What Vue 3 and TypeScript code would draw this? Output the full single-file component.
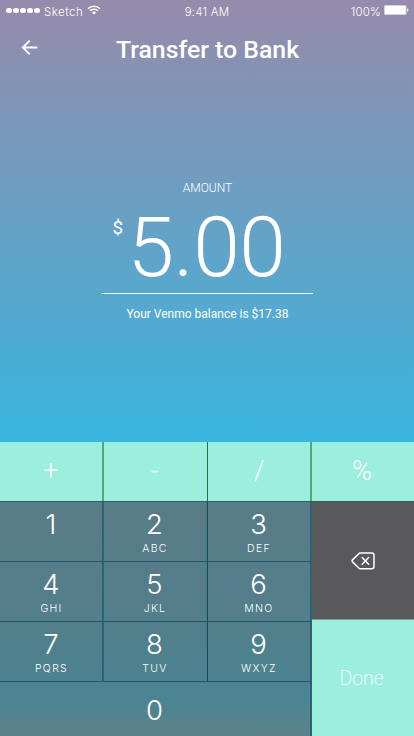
<script setup lang="ts">
interface Key {
  digit: string
  letters: string
}

const operators: string[] = ['+', '-', '/', '%']

const keys: Key[] = [
  { digit: '1', letters: '' },
  { digit: '2', letters: 'ABC' },
  { digit: '3', letters: 'DEF' },
  { digit: '4', letters: 'GHI' },
  { digit: '5', letters: 'JKL' },
  { digit: '6', letters: 'MNO' },
  { digit: '7', letters: 'PQRS' },
  { digit: '8', letters: 'TUV' },
  { digit: '9', letters: 'WXYZ' },
]
</script>

<template>
  <main class="screen">
    <div class="status">
      <div class="carrier">
        <span class="dots"><i v-for="n in 5" :key="n" class="dot"></i></span>
        <span class="carrier-name">Sketch</span>
        <svg class="wifi" width="14" height="10" viewBox="0 0 14 10" fill="none" stroke="#fff">
          <path d="M1 3.7a8.4 8.4 0 0 1 12 0M3.1 5.8a5.5 5.5 0 0 1 7.8 0" stroke-width="1.4" />
          <path d="M7 9.6 4.9 7.5a3 3 0 0 1 4.2 0z" fill="#fff" stroke="none" />
        </svg>
      </div>
      <div class="time">9:41 AM</div>
      <div class="power">
        <span>100%</span>
        <svg class="battery" width="25" height="10" viewBox="0 0 25 10">
          <rect x="0" y="0" width="22.5" height="10" rx="1.6" fill="#fff" opacity=".6" />
          <rect x="1" y="1" width="20.5" height="8" rx=".8" fill="#fff" />
          <path d="M23.2 3.2c1.6.5 1.6 3.1 0 3.6z" fill="#fff" />
        </svg>
      </div>
    </div>

    <header class="header">
      <svg class="back" width="17" height="17" viewBox="0 0 18 18" fill="none" stroke="#fff" stroke-width="2">
        <path d="M17.4 9H2.4M9.2 1.8 2 9l7.2 7.2" />
      </svg>
      <h1 class="title">Transfer to Bank</h1>
    </header>

    <section class="amount">
      <div class="label">AMOUNT</div>
      <div class="value">
        <span class="currency">$</span>
        <span class="number">5.00</span>
      </div>
      <div class="balance">Your Venmo balance is $17.38</div>
    </section>

    <section class="keypad">
      <div class="operators">
        <button v-for="op in operators" :key="op" class="op">{{ op }}</button>
      </div>
      <div class="lower">
        <div class="digits">
          <button v-for="k in keys" :key="k.digit" class="key">
            <span class="digit">{{ k.digit }}</span>
            <span class="letters">{{ k.letters }}</span>
          </button>
          <button class="key zero"><span class="digit">0</span></button>
        </div>
        <div class="actions">
          <button class="delete">
            <svg width="24" height="18" viewBox="0 0 24 18" fill="none" stroke="#fff" stroke-width="1.5" stroke-linejoin="round" stroke-linecap="round">
              <path d="M8.6 1H20.8a2.2 2.2 0 0 1 2.2 2.2v11.4a2.2 2.2 0 0 1-2.2 2.2H8.6L1.5 9.9a1.4 1.4 0 0 1 0-2z" />
              <path d="m11.2 5.6 6.4 6.6m0-6.6-6.4 6.6" />
            </svg>
          </button>
          <button class="done">Done</button>
        </div>
      </div>
    </section>
  </main>
</template>

<style>
body {
  margin: 0;
}
</style>

<style scoped>
.screen {
  width: 414px;
  height: 736px;
  overflow: hidden;
  display: flex;
  flex-direction: column;
  color: #fff;
  font-family: Roboto, sans-serif;
  background: linear-gradient(180deg, #968bab 0, #39b6df 442px);
}
button {
  border: 0;
  margin: 0;
  padding: 0;
  background: none;
  color: inherit;
  font: inherit;
  box-sizing: border-box;
}
.status {
  height: 24px;
  display: grid;
  grid-template-columns: 1fr auto 1fr;
  font: 300 11.5px/24px Inter, sans-serif;
  letter-spacing: 0.2px;
}
.carrier {
  display: flex;
  padding-left: 6px;
}
.dots {
  display: flex;
  gap: 1.5px;
  padding-top: 7.5px;
}
.dot {
  width: 5.5px;
  height: 5.5px;
  border-radius: 50%;
  background: #fff;
}
.carrier-name {
  margin-left: 4.5px;
  letter-spacing: 0.5px;
}
.wifi {
  margin: 5px 0 0 4px;
}
.power {
  display: flex;
  justify-content: flex-end;
  padding-right: 5px;
}
.battery {
  margin: 5px 0 0 3px;
}
.header {
  position: relative;
  height: 50px;
  display: flex;
  justify-content: center;
}
.back {
  position: absolute;
  left: 20.5px;
  top: 14.5px;
}
.title {
  margin: 0;
  padding-left: 1px;
  font-size: 24.8px;
  font-weight: 500;
  line-height: 52px;
}
.amount {
  height: 368px;
  display: flex;
  flex-direction: column;
  align-items: center;
}
.label {
  margin-top: 106px;
  padding-left: 1px;
  font-size: 12px;
  font-weight: 300;
  line-height: 16px;
}
.value {
  width: 211px;
  height: 98px;
  border-bottom: 1px solid #fff;
  display: flex;
  box-sizing: border-box;
}
.currency {
  width: 26px;
  padding-left: 11px;
  box-sizing: border-box;
  font-size: 19px;
  line-height: 63px;
}
.number {
  font-size: 84px;
  font-weight: 300;
  line-height: 104px;
  letter-spacing: -0.5px;
}
.balance {
  margin-top: 11px;
  font-size: 12px;
  line-height: 18px;
  padding-left: 1px;
}
.keypad {
  height: 294px;
}
.operators {
  display: grid;
  grid-template-columns: 104px 104px 104px 102px;
  height: 60px;
  box-sizing: border-box;
  background: #9befdc;
  border-bottom: 1px solid #24646f;
}
.op {
  font-size: 27px;
  font-weight: 300;
  line-height: 56px;
  padding-bottom: 2px;
  border-right: 2px solid #4daa7e;
}
.op:nth-child(2) {
  border-right: 1px solid #147843;
  padding-right: 2px;
}
.op:last-child {
  border-right: 0;
  padding-right: 2px;
}
.lower {
  display: flex;
  height: 234px;
}
.digits {
  width: 312px;
  display: grid;
  grid-template-columns: repeat(3, 104px);
  grid-template-rows: repeat(3, 60px) 54px;
  box-sizing: border-box;
  background: linear-gradient(180deg, #5a7b88 0, #527e8a 120px, #4b8492 195px, #5c838c 234px);
  font-family: Inter, sans-serif;
}
.key {
  display: flex;
  flex-direction: column;
  align-items: center;
  border-right: 2px solid #2c6473;
  border-bottom: 1px solid #1e5868;
}
.key:nth-child(3n) {
  padding-right: 1px;
}
.key:nth-child(3n + 2) {
  border-right: 1px solid #104c5c;
  padding-right: 2px;
}
.key.zero {
  grid-column: 1 / 4;
  border-right: 2px solid #2c6473;
  border-bottom: 0;
  padding: 6px 1px 0 0;
}
.digit {
  font-size: 27.5px;
  line-height: 34px;
  padding-top: 5px;
  font-weight: 350;
}
.letters {
  margin-top: 1px;
  padding-left: 1px;
  font-size: 10.5px;
  line-height: 13px;
  letter-spacing: 1.3px;
  font-weight: 350;
}
.actions {
  flex: 1;
  display: flex;
  flex-direction: column;
}
.delete {
  height: 118px;
  display: flex;
  justify-content: center;
  align-items: center;
  border-bottom: 1px solid #7f9b96;
  background: #59595b;
}
.done {
  flex: 1;
  padding-right: 3px;
  background: #9befdc;
  font-size: 19.5px;
  font-weight: 200;
}
</style>
